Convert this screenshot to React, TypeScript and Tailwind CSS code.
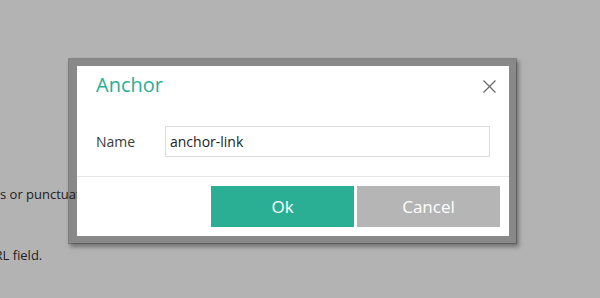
import React from "react";

export default function App() {
  const font = { fontFamily: '"Open Sans", "Noto Sans", sans-serif' };
  return (
    <div
      className="relative w-[600px] h-[298px] overflow-hidden bg-[#b3b3b3] text-[#222]"
      style={font}
    >
      <div className="pt-[184px] text-[13px] leading-[20px] whitespace-nowrap">
        <div>s or punctuation marks.</div>
        <div className="mt-[41px] -ml-[15px]">URL field.</div>
      </div>

      <div className="absolute left-[68px] top-[58px] w-[449px] h-[186px] border-[8px] border-l-[9px] border-black/[0.23] bg-white bg-clip-padding shadow-[2px_3px_4px_rgba(0,0,0,0.35)]">
        <div className="mt-[5px] h-[28px] flex items-center justify-between pl-[19px] pr-[13px]">
          <span className="text-[20px] leading-[28px] text-[#2aae94]">Anchor</span>
          <svg width="13" height="13" viewBox="0 0 13 13" className="mt-[2px]">
            <path d="M0.5 0.5 L12.5 12.5 M12.5 0.5 L0.5 12.5" stroke="#6b6b6b" strokeWidth="1.3" fill="none" />
          </svg>
        </div>
        <div className="mt-[27px] flex items-center pl-[19px] pr-[19px]">
          <span className="w-[69px] text-[14px] text-[#3a3a3a]">Name</span>
          <input
            readOnly
            defaultValue="anchor-link"
            className="flex-1 min-w-0 h-[31px] border border-[#dcdcdc] px-[4px] text-[14px] text-[#222] outline-none"
            style={font}
          />
        </div>
        <div className="mt-[19px] h-px bg-[#e6e6e6]" />
        <div className="flex justify-end gap-[3px] pt-[9px] pr-[9px]">
          <button className="w-[143px] h-[41px] bg-[#2aae94] text-white text-[17px]" style={font}>
            Ok
          </button>
          <button className="w-[143px] h-[41px] bg-[#b5b5b5] text-white text-[17px]" style={font}>
            Cancel
          </button>
        </div>
      </div>
    </div>
  );
}
